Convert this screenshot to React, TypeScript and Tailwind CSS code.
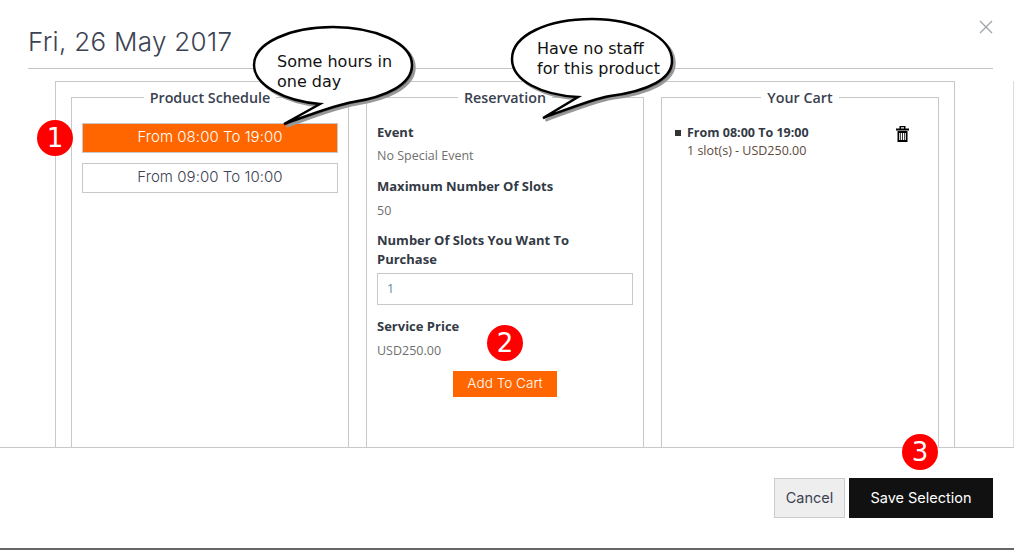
const sans = "font-['Open_Sans',sans-serif]";
const display = "font-['Inter','Lato',sans-serif]";

function Badge({ n, className }: { n: number; className: string }) {
  return (
    <div className={`absolute w-9 h-9 rounded-full bg-[#fe0000] text-white flex items-center justify-center text-[26px] leading-none font-['DejaVu_Sans',sans-serif] ${className}`}>
      {n}
    </div>
  );
}

function Bubble({ path, className, width, height, lines, textClass }: { path: string; className: string; width: number; height: number; lines: string[]; textClass: string }) {
  return (
    <div className={`absolute ${className}`} style={{ width, height }}>
      <svg width={width} height={height} className="absolute left-0 top-0">
        <path d={path} fill="#777" stroke="#999" strokeWidth="2.5" transform="translate(2.5 2.5)" />
        <path d={path} fill="#fff" stroke="#000" strokeWidth="2.5" strokeLinejoin="miter" />
      </svg>
      <div className={`absolute font-['DejaVu_Sans',sans-serif] text-[16px] leading-[20px] text-[#111] whitespace-nowrap ${textClass}`}>
        {lines.map((l) => (
          <div key={l}>{l}</div>
        ))}
      </div>
    </div>
  );
}

function Panel({ title, children }: { title: string; children?: React.ReactNode }) {
  return (
    <fieldset className="flex-1 min-w-0 h-[400px] border border-[#c8c8c8] px-[10px]">
      <legend className={`mx-auto px-[6px] pt-[2px] text-[14.3px] leading-[20px] font-semibold text-[#3a4150] ${sans}`}>{title}</legend>
      {children}
    </fieldset>
  );
}

function Label({ children }: { children: React.ReactNode }) {
  return <div className="text-[13px] leading-[19px] font-bold text-[#333a45]">{children}</div>;
}

function Value({ children, className }: { children: React.ReactNode; className: string }) {
  return <div className={`text-[12.5px] leading-[19px] text-[#6f6f6f] ${className}`}>{children}</div>;
}

export default function App() {
  return (
    <div className="relative w-[1014px] h-[550px] overflow-hidden bg-white flex flex-col border-b-2 border-[#666]">
      {/* header */}
      <div className="relative shrink-0 h-[69px] mr-[21px] ml-[28px] border-b border-[#c4c4c4]">
        <h1 className={`pt-[25px] text-[26px] leading-[34px] font-light tracking-[0.3px] text-[#3b4252] ${display}`}>Fri, 26 May 2017</h1>
        <svg width="14" height="14" viewBox="0 0 14 14" className="absolute right-0 top-[20px]" stroke="#a0a4a8" strokeWidth="1.3">
          <path d="M1 1l12 12M13 1L1 13" />
        </svg>
      </div>

      {/* body */}
      <div className="flex-1 min-h-0 overflow-hidden pt-[12px] pl-[55px] flex">
        <div className="w-[900px] shrink-0 border border-b-0 border-[#c8c8c8] h-[400px] px-[15px] pt-[4px] flex gap-[17px]">
          <Panel title="Product Schedule">
            <div className={`pt-[15px] flex flex-col gap-[10px] text-[15px] tracking-[0.05px] font-light ${display}`}>
              <div className="h-[30px] pb-[1px] border border-[#c8c8c8] bg-[#ff6600] text-white flex items-center justify-center">From 08:00 To 19:00</div>
              <div className="h-[30px] pb-[1px] border border-[#c8c8c8] text-[#3b4252] flex items-center justify-center">From 09:00 To 10:00</div>
            </div>
          </Panel>
          <Panel title="Reservation">
            <div className={`pt-[15px] ${sans}`}>
              <Label>Event</Label>
              <Value className="mt-[4px] mb-[12px]">No Special Event</Value>
              <Label>Maximum Number Of Slots</Label>
              <Value className="mt-[5px] mb-[11px]">50</Value>
              <div className="max-w-[220px]">
                <Label>Number Of Slots You Want To Purchase</Label>
              </div>
              <div className="mt-[4px] h-[32px] border border-[#c8c8c8] px-[9px] flex items-center text-[12.5px] text-[#5a8aa5]">1</div>
              <div className="mt-[12px]">
                <Label>Service Price</Label>
              </div>
              <Value className="mt-[5px] mb-[11px]">USD250.00</Value>
              <div className="flex justify-center">
                <button className={`w-[104px] h-[26px] pb-[2px] bg-[#ff6600] text-white text-[13.6px] font-light ${display}`}>Add To Cart</button>
              </div>
            </div>
          </Panel>
          <Panel title="Your Cart">
            <div className={`pt-[16px] pl-[3px] flex items-start ${sans}`}>
              <div className="w-[6px] h-[6px] bg-[#333] mt-[6px] mr-[6px]" />
              <div className="flex-1">
                <div className="text-[12.5px] leading-[18px] font-bold text-[#333a45]">From 08:00 To 19:00</div>
                <div className="text-[12.5px] leading-[18px] text-[#5c4a3a]">1 slot(s) - USD250.00</div>
              </div>
              <svg width="13" height="16" viewBox="0 0 13 16" className="mr-[19px] mt-[2px]" fill="#000">
                <path fillRule="evenodd" d="M3.5 0h6v2.5H13V4.5H0V2.5h3.500zM5 1.200v1.300h3V1.200z" />
                <path fillRule="evenodd" d="M1.500 5h10v11h-10zM3.200 7v7h1.100V7zM5 7v7h1.100V7zM6.900 7v7H8V7zM8.700 7v7h1.100V7z" />
              </svg>
            </div>
          </Panel>
        </div>
        <div className="ml-auto w-px h-[400px] bg-[#dcdcdc]" />
      </div>

      {/* footer */}
      <div className="shrink-0 h-[101px] border-t border-[#c8c8c8] flex items-start justify-end gap-1 pt-[30px] pr-[21px]">
        <button className={`w-[71px] h-[40px] bg-[#eee] border border-[#ccc] text-[14.5px] text-[#3b4252] ${display}`}>Cancel</button>
        <button className={`w-[144px] h-[40px] bg-[#111] text-white text-[14.5px] ${display}`}>Save Selection</button>
      </div>

      {/* annotations */}
      <Bubble
        className="left-[250px] top-[23px]"
        width={172}
        height={106}
        path="M83 4C125 4 162 20 162 42C162 62 135 74 103 79C85 82 65 90 34 101L70 81C34 78 4 62 4 42C4 20 40 4 83 4Z"
        lines={["Some hours in", "one day"]}
        textClass="left-[27px] top-[29px]"
      />
      <Bubble
        className="left-[508px] top-[15px]"
        width={172}
        height={108}
        path="M84 4C128 4 164 22 164 46C164 64 140 76 102 81C85 84 65 92 35 103L70 82C34 80 4 66 4 44C4 20 40 4 84 4Z"
        lines={["Have no staff", "for this product"]}
        textClass="left-[29px] top-[24px]"
      />
      <Badge n={1} className="left-[37px] top-[120px]" />
      <Badge n={2} className="left-[487px] top-[325px]" />
      <Badge n={3} className="left-[902px] top-[434px]" />
    </div>
  );
}
